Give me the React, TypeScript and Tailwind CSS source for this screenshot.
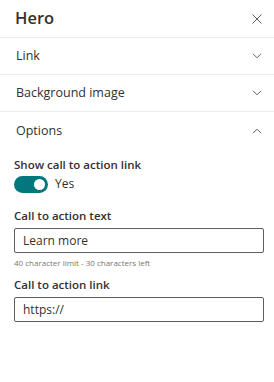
import React from "react";

const Chevron = ({ up = false }: { up?: boolean }) => (
  <svg width="10" height="6" viewBox="0 0 10 6" fill="none" className={up ? "rotate-180" : ""}>
    <path d="M1 0.8 L5 4.8 L9 0.8" stroke="#605e5c" strokeWidth="1" />
  </svg>
);

export default function App() {
  return (
    <div className="w-[274px] h-[382px] bg-white text-[#323130]" style={{ fontFamily: '"Open Sans", "Noto Sans", sans-serif' }}>
      <div className="h-[38px] flex items-center justify-between pl-[15px] pr-[12px] border-b border-[#edebe9]">
        <span className="text-[16.5px] font-semibold leading-none">Hero</span>
        <svg width="10" height="10" viewBox="0 0 10 10">
          <path d="M0.5 0.5 L9.5 9.5 M9.5 0.5 L0.5 9.5" stroke="#605e5c" strokeWidth="1" />
        </svg>
      </div>
      <div className="h-[37px] flex items-center justify-between pl-[16px] pr-[12px] border-b border-[#edebe9]">
        <span className="text-[12.5px]">Link</span>
        <Chevron />
      </div>
      <div className="h-[37px] flex items-center justify-between pl-[16px] pr-[12px] border-b border-[#edebe9]">
        <span className="text-[12.5px]">Background image</span>
        <Chevron />
      </div>
      <div className="h-[38px] flex items-center justify-between pl-[16px] pr-[12px]">
        <span className="text-[12.5px]">Options</span>
        <Chevron up />
      </div>
      <div className="pl-[14px] pr-[10px] pt-[6px] flex flex-col">
        <span className="text-[11.5px] font-semibold leading-[18px]">Show call to action link</span>
        <div className="flex items-center gap-[7px] mt-[1px]">
          <div className="w-[34px] h-[17px] rounded-full bg-[#03787c] flex items-center justify-end pr-[3px]">
            <div className="w-[11px] h-[11px] rounded-full bg-white" />
          </div>
          <span className="text-[12px]">Yes</span>
        </div>
        <span className="text-[11.5px] font-semibold leading-[18px] mt-[14px]">Call to action text</span>
        <div className="mt-[3px] h-[25px] border border-[#605e5c] rounded-[2px] flex items-center px-[8px] text-[12px]">Learn more</div>
        <span className="text-[8px] text-[#797775] mt-[5px] leading-[10px]">40 character limit - 30 characters left</span>
        <span className="text-[11.5px] font-semibold leading-[18px] mt-[8px]">Call to action link</span>
        <div className="mt-[3px] h-[25px] border border-[#605e5c] rounded-[2px] flex items-center px-[8px] text-[12px]">https://</div>
      </div>
    </div>
  );
}
